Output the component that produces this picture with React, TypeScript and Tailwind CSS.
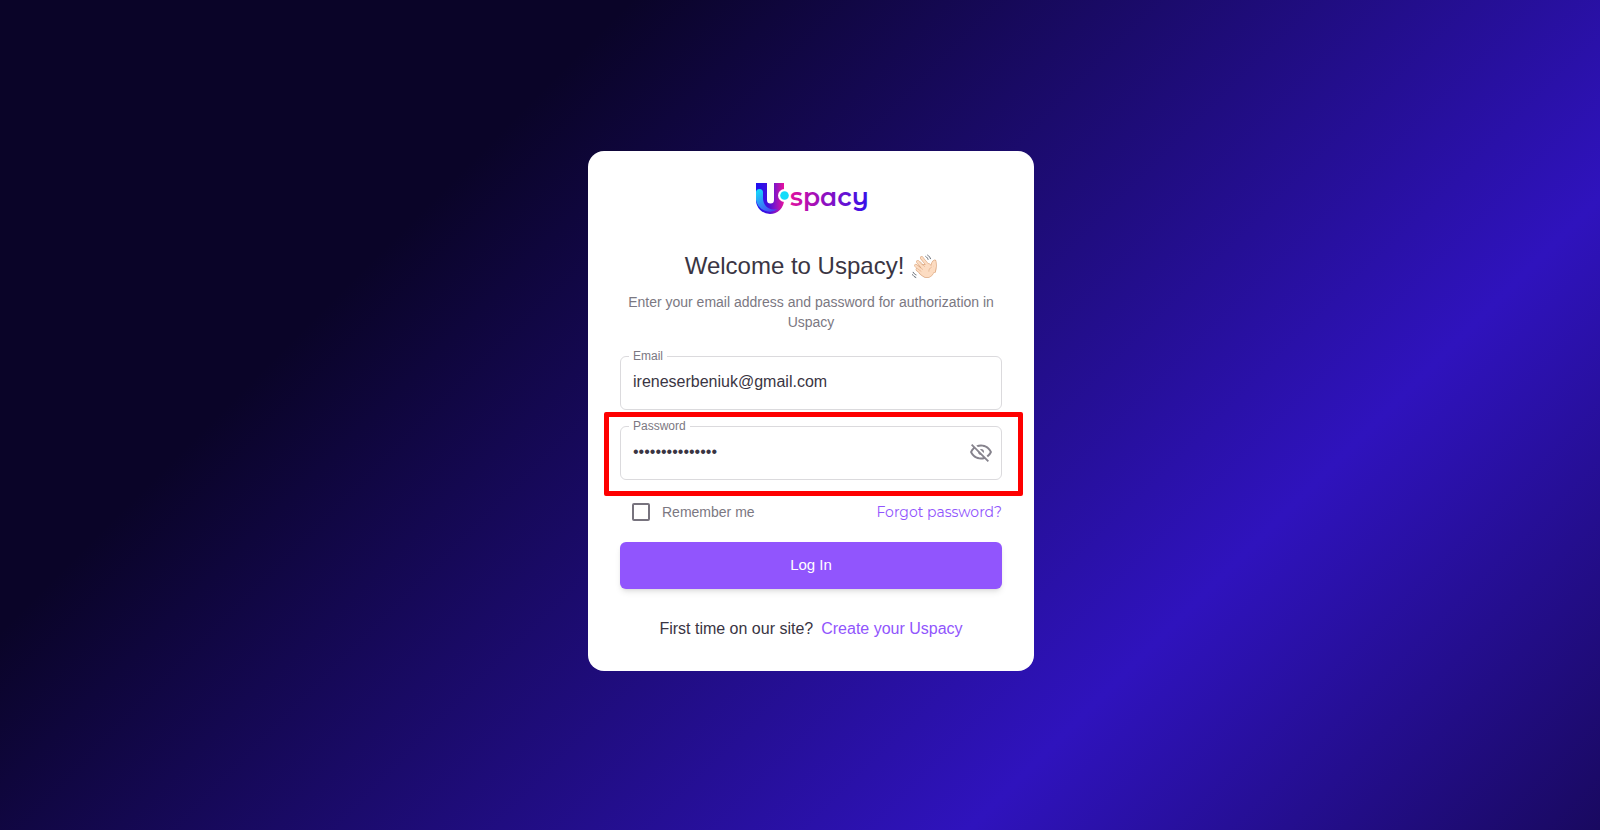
import React, { useState } from "react";

const Logo = () => {
  return (
    <svg width="110" height="32" viewBox="0 0 110 32" className="overflow-visible" role="img" aria-label="Uspacy">
      <defs>
        <linearGradient id="mark" x1="0" y1="0" x2="1" y2="0">
          <stop offset="0" stopColor="#1c10f2" />
          <stop offset="0.45" stopColor="#4410dc" />
          <stop offset="0.7" stopColor="#8a14c4" />
          <stop offset="1" stopColor="#e8109c" />
        </linearGradient>
        <linearGradient id="swoosh" x1="0" y1="0" x2="0.7" y2="1">
          <stop offset="0" stopColor="#10e4fa" />
          <stop offset="0.5" stopColor="#2f94f8" />
          <stop offset="1" stopColor="#4a44f2" />
        </linearGradient>
        <linearGradient id="word" gradientUnits="userSpaceOnUse" x1="34" y1="0" x2="110" y2="0">
          <stop offset="0" stopColor="#e010a0" />
          <stop offset="0.45" stopColor="#9010c0" />
          <stop offset="1" stopColor="#3a10e8" />
        </linearGradient>
      </defs>
      <path d="M0 0h11v17a3.500 3.500 0 0 0 7 0V0h10v17a14 14 0 0 1-28 0z" fill="url(#mark)" />
      <path d="M0 9.500a3.500 3.500 0 0 1 7 0V15c0 6.500 4.500 11.500 10.500 11.500c2 0 3.800-.4 5.300-1.200A14 14 0 0 1 0 17z" fill="url(#swoosh)" />
      <circle cx="28.500" cy="12.500" r="6.500" fill="#fff" />
      <circle cx="28.500" cy="12.500" r="4.300" fill="#12dcfa" />
      <text x="34" y="23" fill="url(#word)" className="font-['Montserrat_Alternates','Montserrat','Lato',sans-serif] text-[25px] font-semibold">
        spacy
      </text>
    </svg>
  );
};

const Wave = () => {
  return (
    <svg className="h-[25px] w-[25px]" viewBox="0 0 26 26" fill="none" strokeLinecap="round" strokeLinejoin="round" role="img" aria-label="Waving hand">
      {/* darker rim, then the skin on top of it */}
      <g stroke="#dba57c" strokeWidth="3.400">
        <path d="M6 8l6 7M10 4l7 8.500M4 12l7 6M5.500 16l6 5" />
        <path d="M21 15c-.4-3 .6-6 2.600-7.500c.6 3 .6 7-.4 10.500" />
      </g>
      <path d="M9.500 11l8.500-1.500l3 3c2.400 2.500 2.600 4.500 2.100 6.500c-1.300 4-4.500 6-7.500 6c-3.500 0-6-2.500-8.500-5z" fill="#dfac86" />
      <g stroke="#fcdcc2" strokeWidth="2.400">
        <path d="M6 8l6 7M10 4l7 8.500M4 12l7 6M5.500 16l6 5" />
        <path d="M21.300 15c-.4-3 .6-6 2.200-7.200c.6 3 .4 7-.6 10.200" />
      </g>
      <path d="M10 12l8-1.500l2.800 3c2 2.500 2 4.500 1.400 6c-1.200 3.400-4 4.700-6.500 4.700c-3 0-5.500-2.200-7.900-4.700z" fill="#fcdcc2" />
      <path d="M8.800 8l4.200 5M7 12.200l4 3.800M5.800 15.300l3.600 2.700M20 14c-1.700.6-2.600 2.200-2.500 4" stroke="#dba57c" strokeWidth="0.600" />
      <path d="M14.300 2.600c1.200.7 2 1.700 2.400 3M16.300 1.200c1.500.9 2.400 2.100 2.900 3.700M1.200 19c.6 1.300 1.600 2.200 3 2.700M.6 21.500c.8 1.400 1.900 2.300 3.400 2.900" stroke="#5c626b" />
    </svg>
  );
};

const EyeOff = () => {
  return (
    <svg className="h-6 w-6" viewBox="0 0 24 24" fill="#86838d">
      <path d="M2 5.270L3.280 4L20 20.720L18.730 22L15.650 18.920C14.500 19.300 13.280 19.500 12 19.500C7 19.500 2.730 16.390 1 12C1.690 10.240 2.790 8.690 4.190 7.460L2 5.270M12 9A3 3 0 0 1 15 12C15 12.350 14.940 12.690 14.830 13L11 9.170C11.310 9.060 11.650 9 12 9M12 4.500C17 4.500 21.270 7.610 23 12C22.180 14.080 20.790 15.880 19 17.190L17.580 15.760C18.940 14.820 20.060 13.540 20.820 12C19.170 8.640 15.760 6.500 12 6.500C10.910 6.500 9.840 6.680 8.840 7L7.300 5.470C8.740 4.850 10.330 4.500 12 4.500M3.180 12C4.830 15.360 8.240 17.500 12 17.500C12.690 17.500 13.370 17.430 14 17.290L11.720 15C10.290 14.850 9.150 13.710 9 12.280L5.600 8.870C4.610 9.720 3.780 10.780 3.180 12Z" />
    </svg>
  );
};

const App = () => {
  const [email, setEmail] = useState("ireneserbeniuk@gmail.com");
  const [password, setPassword] = useState("uspacy-password");
  const [visible, setVisible] = useState(false);

  return (
    <main className="flex min-h-screen items-center justify-center bg-[linear-gradient(135deg,#0a0428_0%,#0a0428_26%,#2f13bd_74%,#190960_100%)] pb-2 pl-[22px] font-['Liberation_Sans',Arial,sans-serif] text-[#3a3543]">
      <form
        className="w-full max-w-[446px] rounded-2xl bg-white px-8 pt-8 pb-[30px]"
        onSubmit={(e) => e.preventDefault()}
      >
        <div className="flex justify-center">
          <Logo />
        </div>

        {/* Heading */}
        <h1 className="mt-[35px] flex items-center justify-center gap-2 text-2xl leading-8">
          Welcome to Uspacy! <Wave />
        </h1>
        <p className="mt-2.5 text-center text-sm leading-5 text-[#7b7882]">
          Enter your email address and password for authorization in Uspacy
        </p>

        {/* Fields */}
        <fieldset className="mt-[18px] h-[60px] rounded-md border border-[#dbdadd] px-2">
          <legend className="h-3 px-1 text-xs leading-3 text-[#7b7882]">
            <label htmlFor="email">Email</label>
          </legend>
          <input
            id="email"
            type="email"
            value={email}
            onChange={(e) => setEmail(e.target.value)}
            className="h-10 w-full px-1 text-base outline-none"
          />
        </fieldset>

        <div className="mt-0.5 -mr-[21px] -ml-4 rounded-xs border-5 border-[#fe0000] pt-[3px] pr-4 pb-[11px] pl-[11px]">
          <fieldset className="h-[60px] rounded-md border border-[#dbdadd] px-2">
            <legend className="h-3 px-1 text-xs leading-3 text-[#7b7882]">
              <label htmlFor="password">Password</label>
            </legend>
            <div className="flex items-center">
              <input
                id="password"
                type={visible ? "text" : "password"}
                value={password}
                onChange={(e) => setPassword(e.target.value)}
                className="h-10 min-w-0 flex-1 px-1 text-base outline-none"
              />
              <button type="button" aria-label="Show password" onClick={() => setVisible(!visible)}>
                <EyeOff />
              </button>
            </div>
          </fieldset>
        </div>

        <div className="mt-1.5 flex h-5 items-center justify-between text-sm">
          <label className="flex items-center gap-3 pl-3 text-[#7b7882]">
            <input
              type="checkbox"
              className="h-[18px] w-[18px] appearance-none rounded-xs border-2 border-[#77737e] checked:bg-[#9155fd]"
            />
            Remember me
          </label>
          <a href="#forgot" className="font-['Montserrat','Open_Sans',sans-serif] text-[#9155fd]">
            Forgot password?
          </a>
        </div>

        <button
          type="submit"
          className="mt-5 h-[47px] w-full rounded-md bg-[#9155fd] text-[15px] text-white shadow-md"
        >
          Log In
        </button>

        <p className="mt-7 flex justify-center gap-2 text-base leading-6">
          First time on our site?
          <a href="#create" className="text-[#9155fd]">
            Create your Uspacy
          </a>
        </p>
      </form>
    </main>
  );
};

export default App;
